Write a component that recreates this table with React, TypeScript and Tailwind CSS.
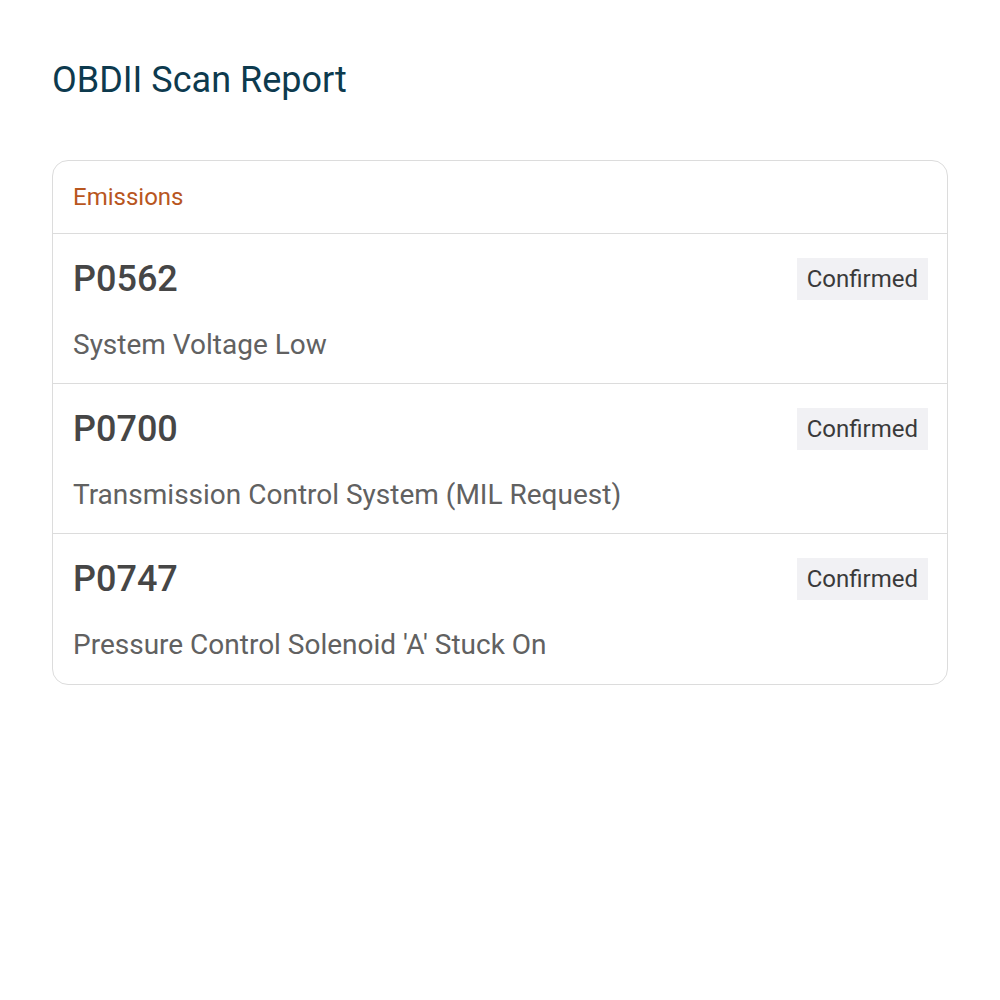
const codes = [
  { code: "P0562", status: "Confirmed", description: "System Voltage Low" },
  { code: "P0700", status: "Confirmed", description: "Transmission Control System (MIL Request)" },
  { code: "P0747", status: "Confirmed", description: "Pressure Control Solenoid 'A' Stuck On" },
];

export default function App() {
  return (
    <div className="min-h-screen bg-white px-[52px] pt-[56px] font-['Roboto',sans-serif]">
      <h1 className="text-[36px] leading-[48px] text-[#0d3a4e]">OBDII Scan Report</h1>
      <div className="mt-[56px] rounded-2xl border border-[#dcdcdc] overflow-hidden">
        <div className="flex h-[73px] items-center border-b border-[#dcdcdc] px-5">
          <span className="text-[24px] text-[#b8561e]">Emissions</span>
        </div>
        {codes.map((item, index) => (
          <div
            key={item.code}
            className={`flex h-[150px] flex-col pl-5 pr-[19px] pt-6 ${index < codes.length - 1 ? "border-b border-[#dcdcdc]" : ""}`}
          >
            <div className="flex items-center justify-between">
              <span className="text-[36px] font-medium leading-[42px] text-[#464646]">{item.code}</span>
              <span className="flex h-[42px] items-center bg-[#f1f1f4] px-[10px] text-[24px] text-[#3a3a3a]">
                {item.status}
              </span>
            </div>
            <p className="mt-[29px] text-[28px] leading-[32px] text-[#616161]">{item.description}</p>
          </div>
        ))}
      </div>
    </div>
  );
}
